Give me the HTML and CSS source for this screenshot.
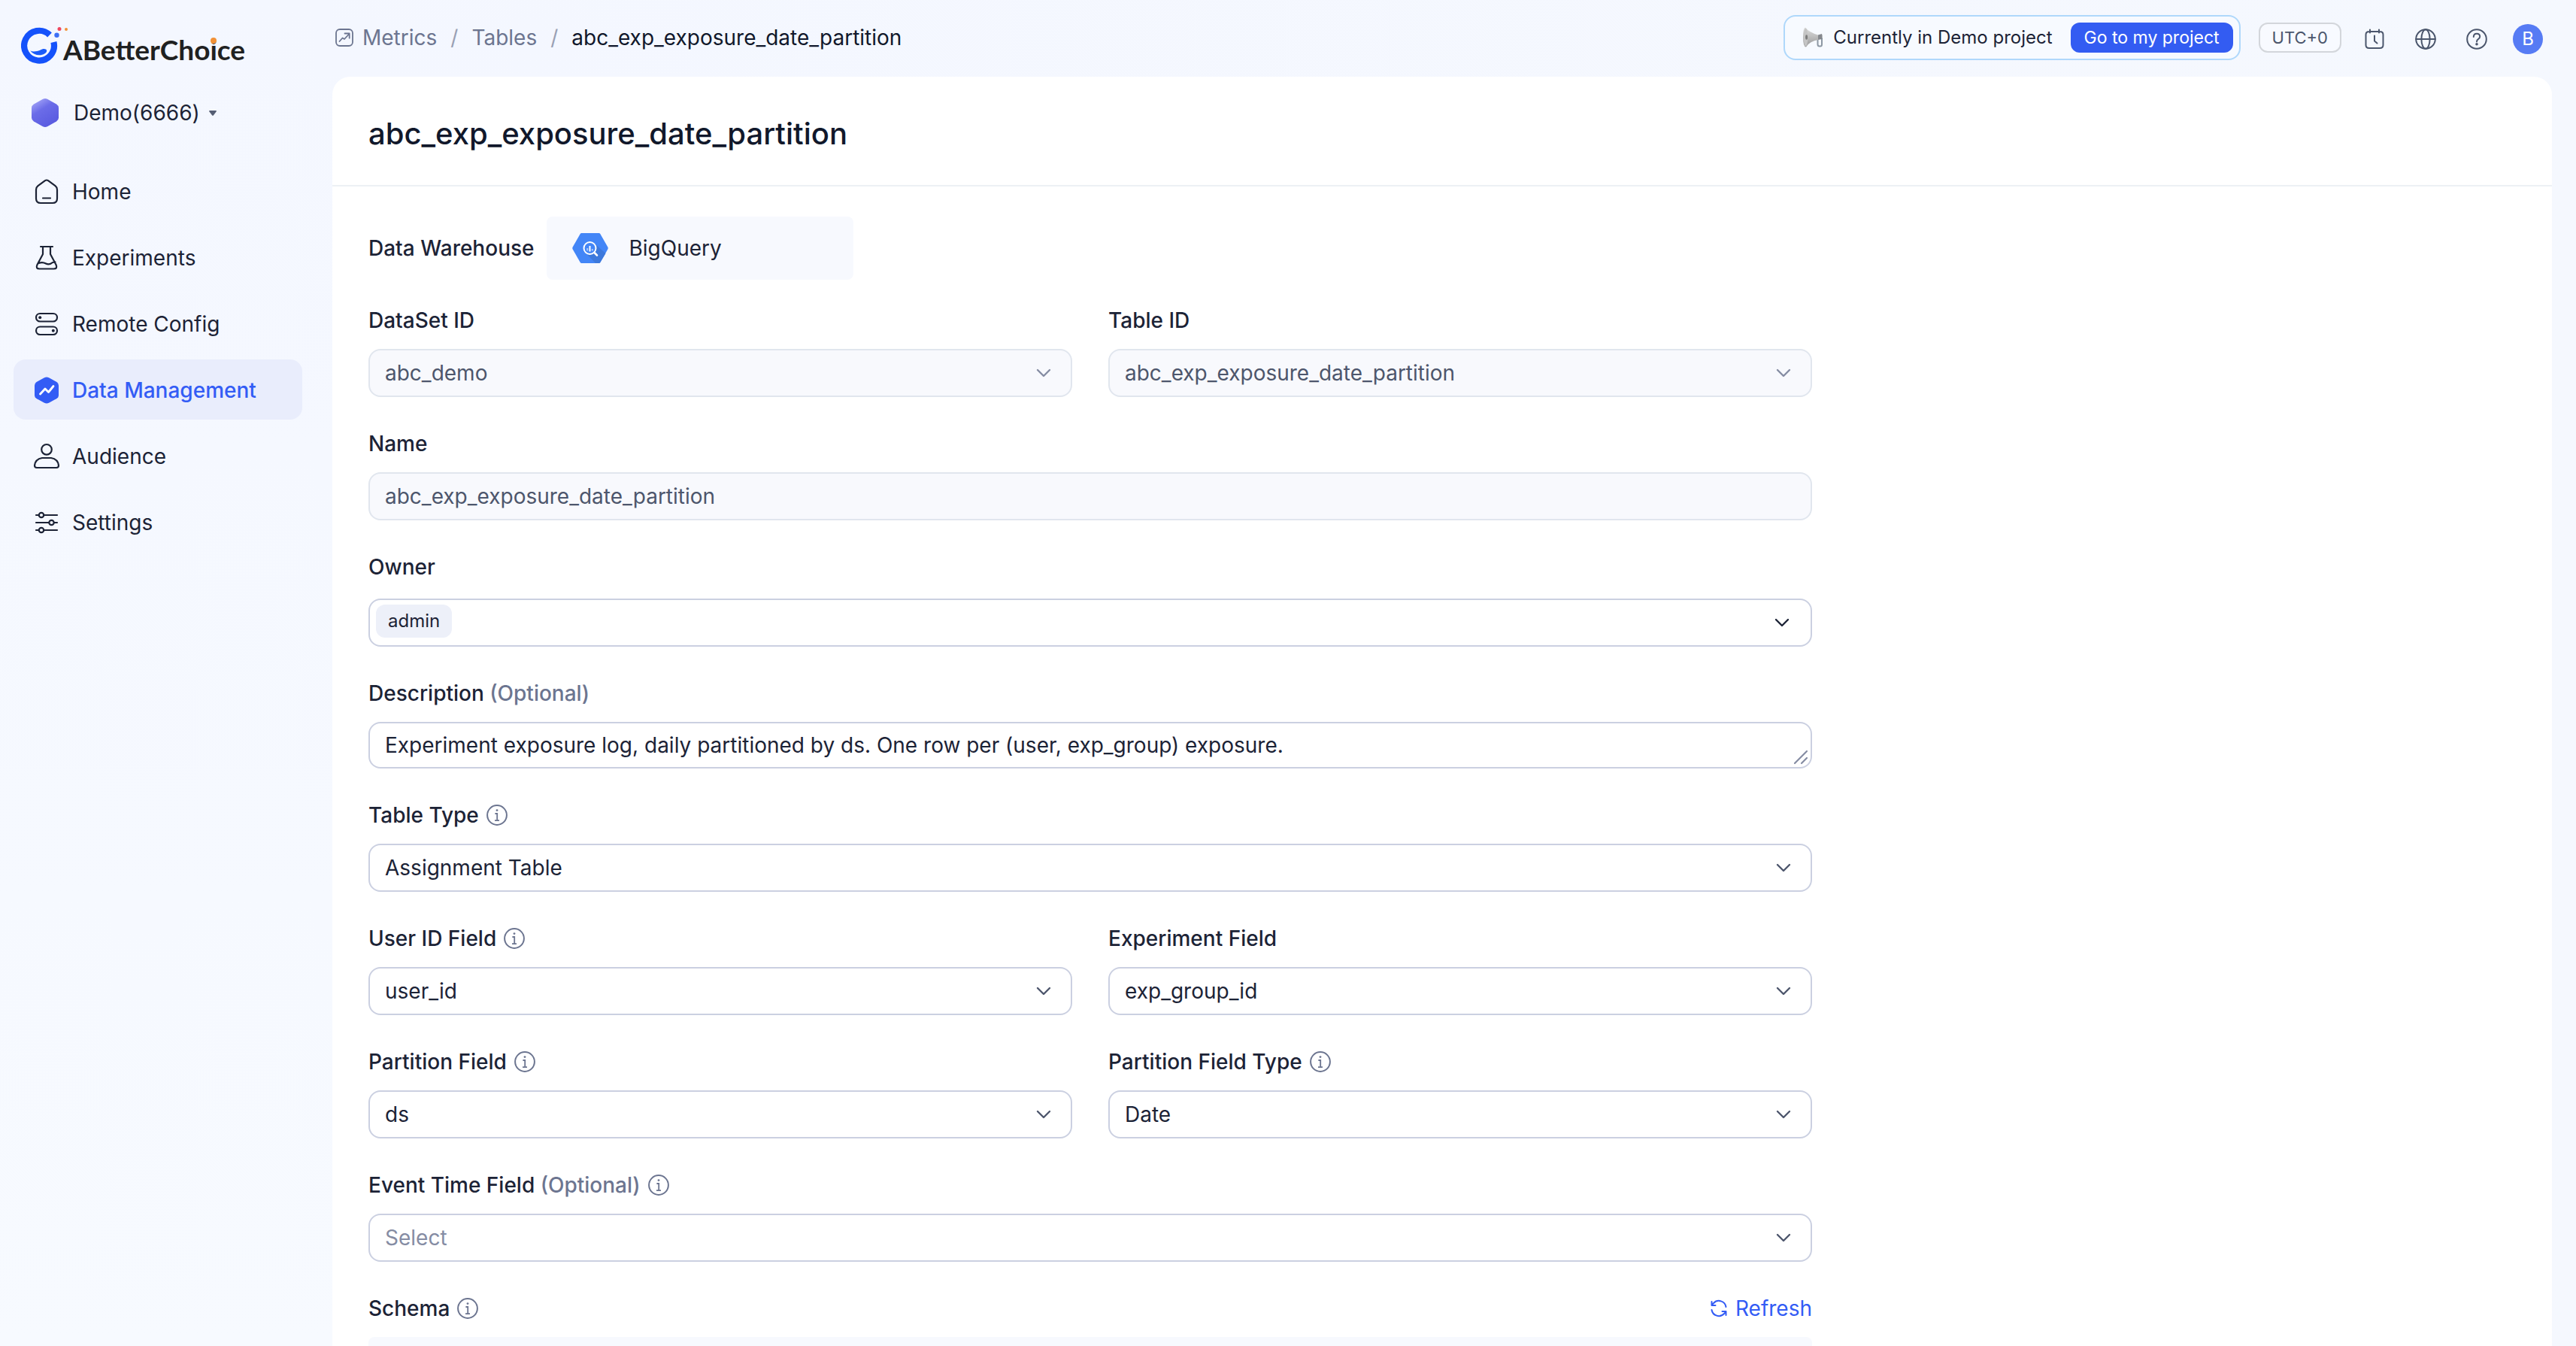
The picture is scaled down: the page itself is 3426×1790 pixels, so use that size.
FILE: index.html
```html
<!DOCTYPE html>
<html lang="en">
<head>
<meta charset="utf-8">
<title>abc_exp_exposure_date_partition - ABetterChoice</title>
<link rel="stylesheet" href="styles.css">
</head>
<body>
<svg class="sprite" aria-hidden="true">
  <symbol id="chevron" viewBox="0 0 20 12"><path d="M2 2l8 8 8-8" fill="none" stroke="currentColor" stroke-width="2.4" stroke-linecap="round" stroke-linejoin="round"/></symbol>
  <symbol id="info" viewBox="0 0 28 28"><circle cx="14" cy="14" r="12.9" fill="none" stroke="currentColor" stroke-width="2"/><circle cx="14" cy="7.6" r="1.4" fill="currentColor"/><path d="M11.4 12h2.8v9M11 21.2h6" fill="none" stroke="currentColor" stroke-width="1.8"/></symbol>
</svg>
<div class="app">
  <aside class="sidebar">
    <a class="logo" href="#">
      <svg class="logo-mark" viewBox="0 0 64 52">
        <path d="M38 12.500A19.900 19.900 0 1 0 43.400 22" fill="none" stroke="#1552fb" stroke-width="8.200"/>
        <path d="M12.300 33.500c4.500 2 9 .5 13-.8 3-1.900 6-2.200 8-1 2 2 .3 4.300-1.800 5.600-6 3.700-14.700 2.200-19.200-3.800z" fill="#1b5cf9"/>
        <circle cx="47.500" cy="12.700" r="3.200" fill="#3e6ff5"/><circle cx="51" cy="4.500" r="2.500" fill="#f0475f"/><circle cx="60" cy="5" r="2" fill="#f29137"/>
      </svg>
      <span class="logo-text">ABetterCho<span class="logo-i">i</span>ce</span>
    </a>
    <button class="project" type="button">
      <svg class="project-icon" viewBox="0 0 36 38"><defs><linearGradient id="hex" x1="0" y1="0" x2=".6" y2="1"><stop offset="0" stop-color="#b3b4fb"/><stop offset=".45" stop-color="#6b6ce8"/><stop offset="1" stop-color="#5a5be0"/></linearGradient></defs><path d="M15 .8q3-1.600 6 0l12 6.800q3 1.800 3 5v13q0 3.200-3 5l-12 6.600q-3 1.600-6 0L3 30.600q-3-1.800-3-5v-13q0-3.200 3-5z" fill="url(#hex)"/></svg>
      <span>Demo(6666)</span>
      <svg class="caret" viewBox="0 0 10 7"><path d="M1 0h8q1.500.3.600 1.600L6 6.200q-1 1-2 0L.4 1.600Q-.5.300 1 0z" fill="#555e74"/></svg>
    </button>
    <nav class="nav">
      <a class="nav-item" href="#"><svg class="nav-icon" viewBox="0 0 36 36"><path d="M16 3.200q2-1.400 4 0l9.500 7q2.500 2 2.500 5V27q0 6-6 6H10q-6 0-6-6V15.200q0-3 2.500-5zM13 26.500h10" /></svg>Home</a>
      <a class="nav-item" href="#"><svg class="nav-icon" viewBox="0 0 36 36"><path d="M10 3h16M13 3v10L5.500 27q-2.500 5.500 3 5.500h19q5.500 0 3-5.500L23 13V3M7.500 25q5-2 9.500.5t9-1.500l3.500-.5"/></svg>Experiments</a>
      <a class="nav-item" href="#"><svg class="nav-icon" viewBox="0 0 36 36"><rect x="4" y="4" width="28" height="10.500" rx="5.200"/><rect x="4" y="21.500" width="28" height="10.500" rx="5.200"/><circle class="dot" cx="9.200" cy="9.200" r="2"/><circle class="dot" cx="26.800" cy="26.800" r="2"/></svg>Remote Config</a>
      <a class="nav-item active" href="#" aria-current="page"><svg class="nav-icon" viewBox="0 0 36 36"><path class="solid" d="M15 1.200q3-1.600 6 0l10 5.600q3 1.700 3 5v12.400q0 3.300-3 5l-10 5.600q-3 1.600-6 0l-10-5.600q-3-1.700-3-5V11.800q0-3.300 3-5z"/><path class="line" d="M9.500 23l6.500-7 4.500 4.500 6.500-8"/></svg>Data Management</a>
      <a class="nav-item" href="#"><svg class="nav-icon" viewBox="0 0 36 36"><circle cx="18" cy="8.800" r="6.800"/><path d="M12 20h12q9 1.500 10 10 0 3-3 3H5q-3 0-3-3 1-8.500 10-10z"/></svg>Audience</a>
      <a class="nav-item" href="#"><svg class="nav-icon" viewBox="0 0 36 36"><path d="M4 8h3.500M14.500 8H32M4 18h17M28 18h4M4 28h3.500M14.500 28H32"/><circle cx="11" cy="8" r="3.200"/><circle cx="24.500" cy="18" r="3.200"/><circle cx="11" cy="28" r="3.200"/></svg>Settings</a>
    </nav>
  </aside>
  <div class="content">
    <header class="topbar">
      <nav class="crumbs" aria-label="Breadcrumb">
        <a class="crumb" href="#"><svg class="crumb-icon" viewBox="0 0 24 24"><rect x="1" y="1" width="22" height="22" rx="5"/><path d="M5.500 17l4-4.500 2.500 1.500L18.500 7M12.500 6.500h6.200v6.200"/></svg>Metrics</a>
        <span class="slash">/</span>
        <a class="crumb" href="#">Tables</a>
        <span class="slash">/</span>
        <span class="crumb-current" aria-current="page">abc_exp_exposure_date_partition</span>
      </nav>
      <div class="tools">
        <div class="banner">
          <svg class="horn" viewBox="0 0 28 28"><defs><linearGradient id="horn-fill" x1="0" y1="0" x2="0" y2="1"><stop offset="0" stop-color="#dedede"/><stop offset="1" stop-color="#999"/></linearGradient></defs><path d="M19.500 17v6q0 2.500 2.500 2.500h1q2 0 2-2.500v-9" fill="none" stroke="#8d98a4" stroke-width="2"/><path d="M3 .5Q8 7 20 10.500V17Q9 18.500 4 26.500 0 26 0 13.500T3 .5z" fill="url(#horn-fill)"/><ellipse cx="3.600" cy="13.500" rx="2.800" ry="12" fill="#c4c4c4"/><ellipse cx="4.600" cy="13.500" rx="1.500" ry="3.200" fill="#7b7b7b"/><path d="M20 10.500l5-1.500q1.500 3 0 7l-5 1z" fill="#85888d"/></svg>
          <span>Currently in Demo project</span>
          <button class="primary" type="button">Go to my project</button>
        </div>
        <button class="utc" type="button">UTC+0</button>
        <div class="icons">
          <button class="icon-btn" type="button" aria-label="Tasks"><svg viewBox="0 0 28 28"><path d="M7 4h14q4.500 0 4.500 4v14q0 4-4.500 4H7q-4.500 0-4.500-4V8Q2.500 4 7 4zM8 1.500v4M20 1.500v4M14 9.500v7l3.500 3"/></svg></button>
          <button class="icon-btn" type="button" aria-label="Language"><svg viewBox="0 0 28 28"><circle cx="14" cy="14" r="12.800"/><ellipse cx="14" cy="14" rx="5.600" ry="12.800"/><path d="M1.200 14h25.600"/></svg></button>
          <button class="icon-btn" type="button" aria-label="Help"><svg viewBox="0 0 28 28"><circle cx="14" cy="14" r="12.800"/><path d="M9.800 11q.2-4.200 4.200-4.200t4.200 3.700q0 2.300-2.300 3.700-1.900 1.200-1.900 3.300"/><circle class="dot" cx="14" cy="20.800" r=".8"/></svg></button>
        </div>
        <button class="avatar" type="button">B</button>
      </div>
    </header>
    <main class="panel">
      <div class="panel-head"><h1>abc_exp_exposure_date_partition</h1></div>
      <form class="form">
        <div class="warehouse">
          <span class="label">Data Warehouse</span>
          <div class="warehouse-box">
            <svg class="bq" viewBox="0 0 48 42"><path d="M12.500 1h23q1.200 0 1.800 1l10 17.500q.8 1.500 0 3L37.300 40q-.6 1-1.800 1h-23q-1.200 0-1.800-1L.7 22.500q-.8-1.500 0-3L10.700 2q.6-1 1.800-1z" fill="#4386f7"/><path d="M30 15l14.500 13-7.200 12q-.6 1-1.800 1H31L18.500 28z" fill="#3d79dc"/><circle cx="23.500" cy="21" r="8" fill="#4386f7" stroke="#fff" stroke-width="2"/><path d="M29.500 27l3.500 3.500" stroke="#fff" stroke-width="2.600" stroke-linecap="round"/><path d="M23.500 18v7.500" stroke="#fff" stroke-width="2"/><path d="M20.200 21v3.500M26.800 22v2.500" stroke="#a9c8fb" stroke-width="2"/></svg>
            <span>BigQuery</span>
          </div>
        </div>
        <div class="row">
          <div class="field"><label class="label" for="dataset">DataSet ID</label><div class="control"><select id="dataset" disabled><option>abc_demo</option></select><svg class="chevron"><use href="#chevron"/></svg></div></div>
          <div class="field"><label class="label" for="table-id">Table ID</label><div class="control"><select id="table-id" disabled><option>abc_exp_exposure_date_partition</option></select><svg class="chevron"><use href="#chevron"/></svg></div></div>
        </div>
        <div class="field"><label class="label" for="name">Name</label><div class="control"><input id="name" type="text" value="abc_exp_exposure_date_partition" disabled></div></div>
        <div class="field field-owner"><label class="label" for="owner">Owner</label><div class="control"><div class="tags"><span class="tag">admin</span><input id="owner" class="tags-input" type="text"></div><svg class="chevron chevron-dark"><use href="#chevron"/></svg></div></div>
        <div class="field"><label class="label" for="description">Description <span class="optional">(Optional)</span></label><div class="control"><textarea id="description" rows="1">Experiment exposure log, daily partitioned by ds. One row per (user, exp_group) exposure.</textarea><svg class="grip" viewBox="0 0 20 20"><path d="M2 18L18 2M11 18l7-7"/></svg></div></div>
        <div class="field"><label class="label" for="table-type">Table Type<svg class="info"><use href="#info"/></svg></label><div class="control"><select id="table-type"><option>Assignment Table</option></select><svg class="chevron"><use href="#chevron"/></svg></div></div>
        <div class="row">
          <div class="field"><label class="label" for="user-id">User ID Field<svg class="info"><use href="#info"/></svg></label><div class="control"><select id="user-id"><option>user_id</option></select><svg class="chevron"><use href="#chevron"/></svg></div></div>
          <div class="field"><label class="label" for="experiment">Experiment Field</label><div class="control"><select id="experiment"><option>exp_group_id</option></select><svg class="chevron"><use href="#chevron"/></svg></div></div>
        </div>
        <div class="row">
          <div class="field"><label class="label" for="partition">Partition Field<svg class="info"><use href="#info"/></svg></label><div class="control"><select id="partition"><option>ds</option></select><svg class="chevron"><use href="#chevron"/></svg></div></div>
          <div class="field"><label class="label" for="partition-type">Partition Field Type<svg class="info"><use href="#info"/></svg></label><div class="control"><select id="partition-type"><option>Date</option></select><svg class="chevron"><use href="#chevron"/></svg></div></div>
        </div>
        <div class="field"><label class="label" for="event-time">Event Time Field <span class="optional">(Optional)</span><svg class="info"><use href="#info"/></svg></label><div class="control"><select id="event-time" class="empty"><option>Select</option></select><svg class="chevron"><use href="#chevron"/></svg></div></div>
        <section class="field">
          <div class="schema-head"><h2 class="label">Schema<svg class="info"><use href="#info"/></svg></h2>
            <button class="refresh" type="button"><svg viewBox="0 0 24 24"><path d="M2.500 14a9.600 9.600 0 0 0 16.500 5l2.500-2.500M21.500 21v-5h-5M21.500 10A9.600 9.600 0 0 0 5 5L2.500 7.500M2.500 3v5h5"/></svg>Refresh</button></div>
          <div class="schema-box"></div>
        </section>
      </form>
    </main>
  </div>
</div>
</body>
</html>
```
FILE: styles.css
```css
* { box-sizing: border-box; }
html, body { height: 100%; }
body {
  margin: 0;
  overflow: hidden;
  font: 400 28px/44px Inter, "Liberation Sans", sans-serif;
  color: #1c2336;
  background: linear-gradient(90deg, #f4f7ff 0%, #f5f8fe 100%);
}
button, input, select, textarea { font: inherit; color: inherit; margin: 0; }
button { border: 0; padding: 0; background: none; cursor: pointer; }
a { color: inherit; text-decoration: none; }
h1, h2 { margin: 0; }
svg { display: block; flex: none; }
.sprite { position: absolute; width: 0; height: 0; }

.app { display: flex; height: 100%; }

/* Sidebar */
.sidebar {
  flex: none;
  width: 442px;
  padding: 34px 40px 0 18px;
  background: linear-gradient(180deg, #f4f7ff 0%, #f7faff 100%);
}
.logo { display: flex; padding-left: 10px; height: 52px; }
.logo-mark { width: 64px; height: 52px; }
.logo-text {
  margin-left: -8px;
  padding-top: 12px;
  font: 700 37px/40px Lato, "Liberation Sans", sans-serif;
  color: #1f2121;
}
.logo-i { position: relative; }
/* orange dot laid over the dot of the "i" */
.logo-i::after {
  content: "";
  position: absolute;
  left: calc(50% - 4px);
  top: 7px;
  width: 8px;
  height: 8px;
  border-radius: 50%;
  background: #f29137;
}
.project { display: flex; align-items: center; padding-left: 24px; margin-top: 42px; }
.project-icon { width: 36px; height: 38px; margin-right: 20px; }
.caret { width: 10px; height: 7px; margin-left: 12px; }
.nav { display: flex; flex-direction: column; gap: 8px; margin-top: 42px; }
.nav-item {
  display: flex;
  align-items: center;
  gap: 16px;
  height: 80px;
  padding: 2px 0 0 26px;
  border-radius: 16px;
}
.nav-item.active { background: #e9edfc; color: #335cf5; font-weight: 500; }
.nav-icon {
  width: 36px;
  height: 36px;
  fill: none;
  stroke: currentColor;
  stroke-width: 2.200px;
  stroke-linecap: round;
  stroke-linejoin: round;
}
.nav-icon .dot { fill: currentColor; stroke: none; }
.nav-icon .solid { fill: currentColor; stroke: none; }
.nav-icon .line { stroke: #fff; stroke-width: 2.800px; }

/* Top bar */
.content { flex: 1; min-width: 0; display: flex; flex-direction: column; padding-right: 32px; }
.topbar {
  flex: none;
  display: flex;
  align-items: center;
  justify-content: space-between;
  height: 102px;
  padding: 0 12px 2px 4px;
}
.crumbs { display: flex; align-items: center; gap: 18px; color: #6c7590; }
.crumb { display: flex; align-items: center; gap: 12px; }
.crumb-icon {
  width: 24px;
  height: 24px;
  fill: none;
  stroke: currentColor;
  stroke-width: 1.800px;
  stroke-linecap: round;
  stroke-linejoin: round;
}
.slash { color: #99a0b4; }
.crumb-current { color: #11182b; }
.tools { display: flex; align-items: center; font-size: 24px; }
.banner {
  display: flex;
  align-items: center;
  height: 60px;
  padding: 0 8px 0 24px;
  border: 2px solid #afd8fb;
  border-radius: 16px;
  background: #f7faff;
}
.horn { width: 28px; height: 28px; margin-right: 12px; }
.primary {
  height: 40px;
  margin-left: 24px;
  padding: 0 18px;
  border-radius: 12px;
  background: #335cf2;
  color: #fff;
  font-size: 23px;
  line-height: 40px;
}
.utc {
  height: 40px;
  margin-left: 24px;
  padding: 0 16px;
  border: 2px solid #d3d6db;
  border-radius: 12px;
  background: #f8faff;
  color: #4b566c;
  font-size: 22px;
  line-height: 36px;
}
.icons { display: flex; gap: 40px; margin: 4px 34px 0 30px; }
.icon-btn { color: #4b566c; }
.icon-btn svg {
  width: 28px;
  height: 28px;
  fill: none;
  stroke: currentColor;
  stroke-width: 2px;
  stroke-linecap: round;
  stroke-linejoin: round;
}
.icon-btn .dot { fill: currentColor; }
.avatar {
  width: 40px;
  height: 40px;
  margin-top: 4px;
  border-radius: 50%;
  background: #567bf4;
  color: #fff;
  line-height: 40px;
}

/* Page panel */
.panel {
  flex: 1;
  min-height: 0;
  overflow: hidden;
  border-radius: 24px 24px 0 0;
  background: #fff;
}
.panel-head { padding: 52px 48px 44px; border-bottom: 2px solid #edf0f4; }
.panel-head h1 { font-size: 40px; line-height: 48px; font-weight: 500; color: #11182b; }
.form { max-width: 2016px; padding: 40px 48px; }
.label { display: flex; align-items: center; height: 44px; font-size: 28px; font-weight: 500; white-space: pre; }
.optional { color: #6c7590; }
.info { width: 28px; height: 28px; margin-left: 10px; color: #6c7590; }
.warehouse { display: flex; align-items: center; gap: 16px; margin-bottom: 32px; }
.warehouse-box {
  display: flex;
  align-items: center;
  gap: 28px;
  width: 408px;
  height: 84px;
  padding-left: 34px;
  border-radius: 8px;
  background: #f7f9fe;
}
.bq { width: 48px; height: 42px; }
.row { display: grid; grid-template-columns: 1fr 1fr; gap: 48px; }
.field { display: flex; flex-direction: column; gap: 16px; margin-bottom: 40px; }
.row > .field { min-width: 0; }
.field-owner { gap: 20px; }

.control { display: grid; align-items: center; }
.control > * { grid-area: 1 / 1; }
.control > input, select, textarea, .tags {
  appearance: none;
  width: 100%;
  height: 64px;
  border: 2px solid #cbd0e1;
  border-radius: 16px;
  background: #fff;
  padding: 0 20px;
  outline: 0;
}
.control > input:disabled, select:disabled {
  border-color: #e1e6ee;
  background: #f8f9fd;
  color: #4d566c;
  opacity: 1;
}
select:disabled + .chevron { color: #858ca3; }
select.empty { color: #858ca3; }
textarea { display: block; height: 62px; padding: 7px 20px; line-height: 44px; resize: none; overflow: hidden; }
.chevron { justify-self: end; width: 20px; height: 12px; margin-right: 28px; color: #4d566c; pointer-events: none; }
.chevron-dark { margin-right: 30px; color: #1c2336; }
.grip {
  place-self: end;
  width: 20px;
  height: 20px;
  margin: 0 5px 5px 0;
  fill: none;
  stroke: #858ca3;
  stroke-width: 2.200px;
  stroke-linecap: round;
  pointer-events: none;
}
.tags { display: flex; align-items: flex-start; padding: 6px 8px; }
.tag {
  height: 44px;
  padding: 0 16px;
  border-radius: 12px;
  background: #edf0f9;
  font-size: 24px;
}
.tags-input { flex: 1; height: 44px; border: 0; padding: 0 8px; background: none; outline: 0; }

.schema-head { display: flex; justify-content: space-between; }
.refresh { display: flex; align-items: center; gap: 10px; color: #335cf5; }
.refresh svg {
  width: 24px;
  height: 24px;
  fill: none;
  stroke: currentColor;
  stroke-width: 2px;
  stroke-linecap: round;
  stroke-linejoin: round;
}
.schema-box { height: 84px; border-radius: 8px; background: #f7f9fe; }
```
